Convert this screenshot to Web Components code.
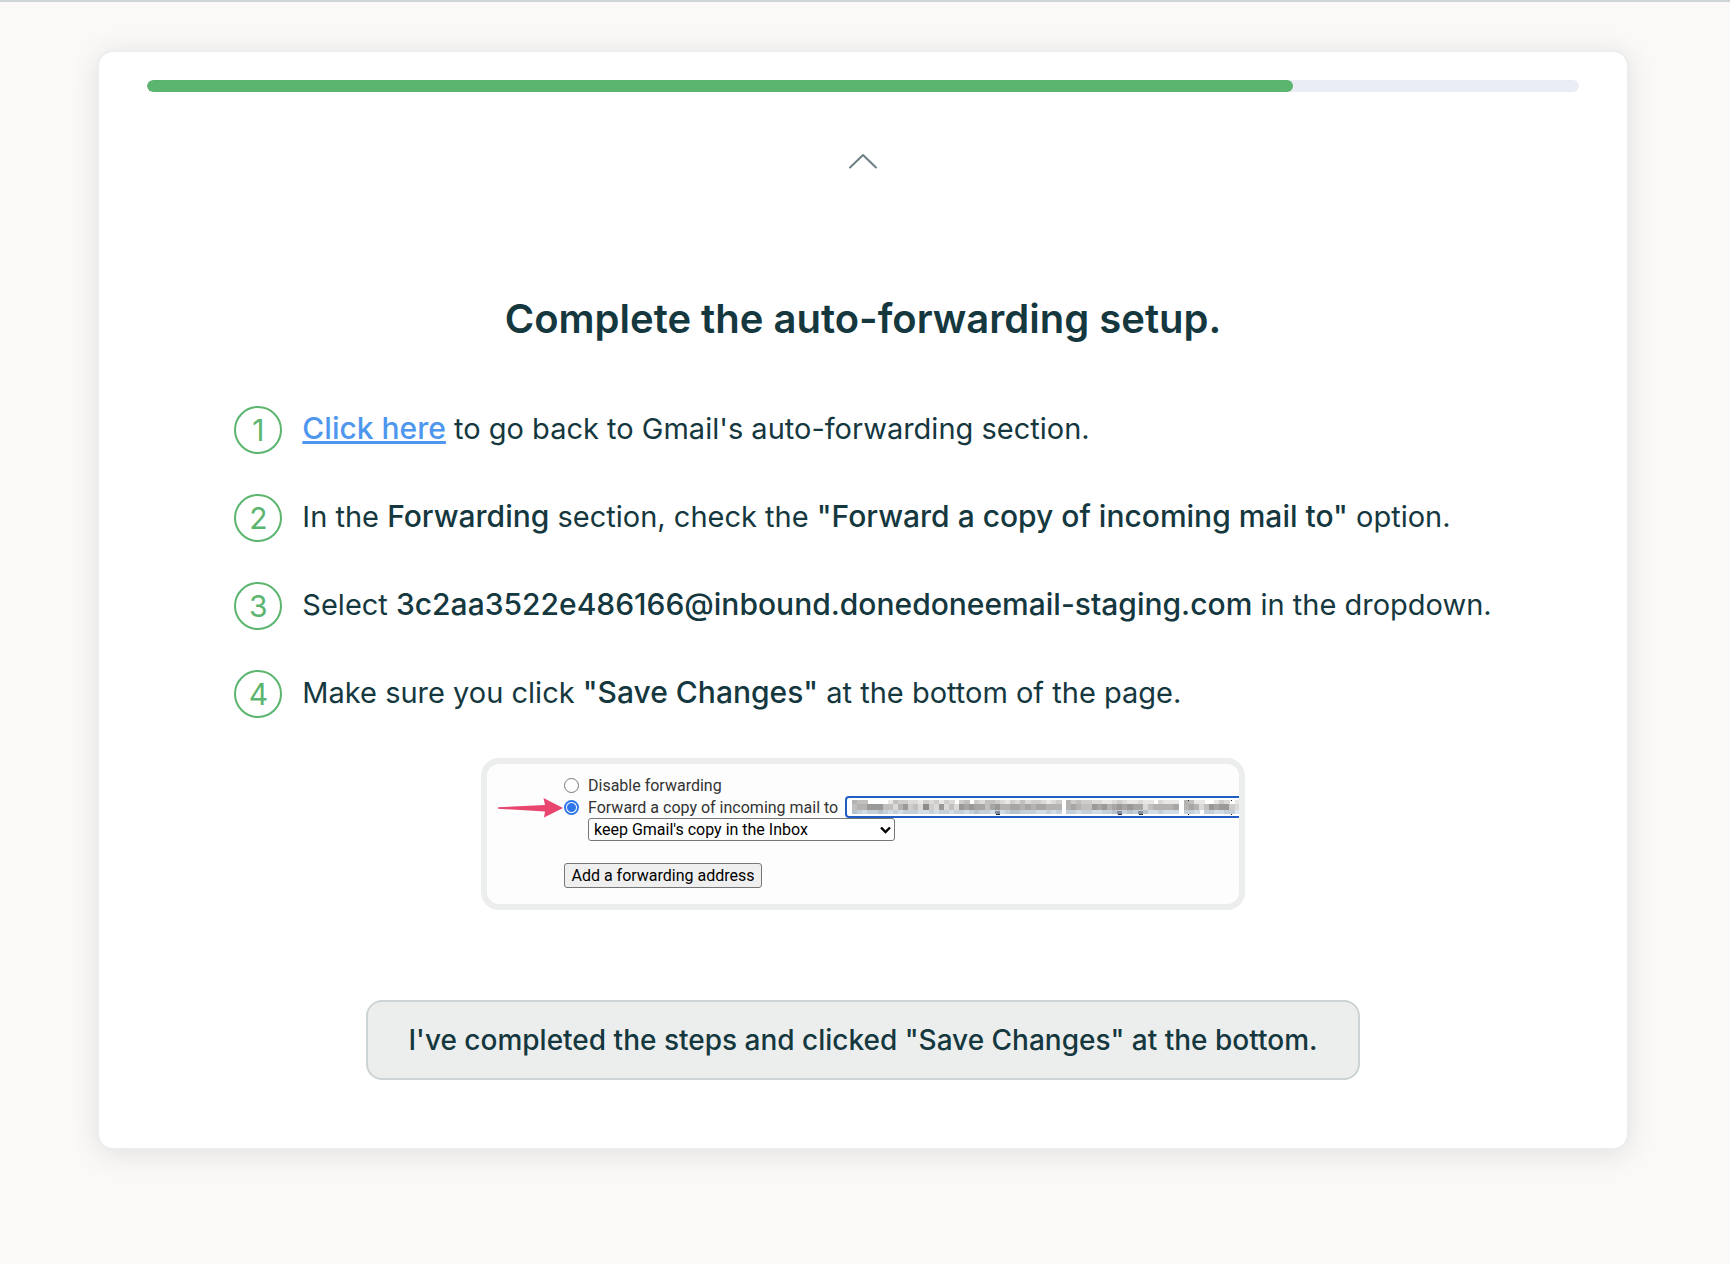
<!DOCTYPE html>
<html lang="en">
<head>
<meta charset="utf-8">
<title>Auto-forwarding setup</title>
<style>
  :root {
    --ink: #15383f;
    --green: #5bb56e;
    --mist: #eceeed;
    --line: #cdd4d6;
    --link: #4f97ee;
  }
  * { box-sizing: border-box; }
  body {
    margin: 0;
    min-height: 100vh;
    border-top: 2px solid var(--line);
    background: #faf9f7;
    color: var(--ink);
    font-family: Inter, "Noto Sans", sans-serif;
    padding: 48px 101px 48px 97px;
  }
  a { color: var(--link); font-size: 30px; font-weight: 500; text-decoration: underline; text-decoration-thickness: 3px; text-underline-offset: 2px; text-decoration-skip-ink: none; }
  strong { font-size: 30px; font-weight: 500; }
</style>
</head>
<body>
<setup-card>
  <setup-progress slot="progress" value="80"></setup-progress>
  <span slot="title">Complete the auto-forwarding setup.</span>
  <setup-step number="1"><a href="#forwarding">Click here</a> to go back to Gmail's auto-forwarding section.</setup-step>
  <setup-step number="2">In the <strong>Forwarding</strong> section, check the <strong>"Forward a copy of incoming mail to"</strong> option.</setup-step>
  <setup-step number="3">Select <strong>3c2aa3522e486166@inbound.donedoneemail-staging.com</strong> in the dropdown.</setup-step>
  <setup-step number="4">Make sure you click <strong>"Save Changes"</strong> at the bottom of the page.</setup-step>
  <gmail-preview slot="preview"></gmail-preview>
  <confirm-button slot="action">I've completed the steps and clicked "Save Changes" at the bottom.</confirm-button>
</setup-card>

<script>
function define(name, html, setup) {
  const template = document.createElement('template');
  template.innerHTML = '<style>*{box-sizing:border-box}</style>' + html;
  customElements.define(name, class extends HTMLElement {
    connectedCallback() {
      if (this.shadowRoot) return;
      const root = this.attachShadow({ mode: 'open' });
      root.append(template.content.cloneNode(true));
      if (setup) setup(this, root);
    }
  });
}

define('setup-card', `
  <style>
    :host { display: flex; flex-direction: column; align-items: center; background: #fff; background-clip: padding-box;
      border: 2px solid var(--mist); border-radius: 16px; padding: 28px 48px 68px; box-shadow: 0 4px 28px rgba(0,0,0,.1); }
    slot[name=progress] { display: block; width: 100%; }
    .back { appearance: none; border: 0; background: none; padding: 0; margin-top: 61px; display: block; }
    .back svg { display: block; }
    h1 { margin: 126px 0 63px; font-size: 40px; line-height: 48px; font-weight: 600; text-align: center; }
    .steps { display: flex; flex-direction: column; gap: 40px; margin-bottom: 40px; }
    slot[name=preview] { display: flex; justify-content: center; width: 100%; margin-bottom: 90px; }
  </style>
  <slot name="progress"></slot>
  <button class="back" type="button" aria-label="Previous step">
    <svg width="30" height="16" viewBox="0 0 30 16" fill="none" stroke="#6c8085" stroke-width="2" stroke-linecap="round" stroke-linejoin="round"><path d="M2 14.500L15 2L28 14.500"/></svg>
  </button>
  <h1><slot name="title"></slot></h1>
  <div class="steps" role="list"><slot></slot></div>
  <slot name="preview"></slot>
  <slot name="action"></slot>`);

define('setup-progress', `
  <style>
    :host { display: block; height: 12px; border-radius: 6px; background: #eaedf6; overflow: hidden; }
    .bar { height: 100%; border-radius: 6px; background: var(--green); }
  </style>
  <div class="bar" role="progressbar" aria-label="Setup progress"></div>`,
  (el, root) => { root.querySelector('.bar').style.width = el.getAttribute('value') + '%'; });

define('setup-step', `
  <style>
    :host { display: flex; gap: 20px; align-items: flex-start; }
    .num { flex: none; width: 48px; height: 48px; border: 2px solid var(--green); border-radius: 50%; color: var(--green);
      font-size: 30px; line-height: 44px; text-align: center; }
    .text { font-size: 29px; line-height: 44px; }
  </style>
  <div class="num"></div>
  <div class="text"><slot></slot></div>`,
  (el, root) => { el.setAttribute('role', 'listitem'); root.querySelector('.num').textContent = el.getAttribute('number'); });

define('confirm-button', `
  <style>
    :host { display: block; }
    button { appearance: none; display: block; border: 2px solid var(--line); border-radius: 16px; background: var(--mist);
      color: var(--ink); font: 500 28px/40px Inter, "Noto Sans", sans-serif; padding: 18px 40px; }
  </style>
  <button type="button"><slot></slot></button>`);

define('pixel-mask', `
  <style>:host { display: block; } svg { display: block; }</style>
  <svg width="388" height="15" viewBox="0 0 388 15" shape-rendering="crispEdges" aria-hidden="true"></svg>`,
  (el, root) => {
    const rows = [
      [0, 4, '54400001433221323132034032443213242332123' + '0' + '5343322112321121102111' + '0' + '54110013201'],
      [4, 6, '45577744257342832724276766467556656566555' + '0' + '5654476756767662455556' + '0' + '56524767732'],
      [10, 4, '43233432323332232332332343323234433322323' + '0' + '3323322334334334223222' + '0' + '33203322331']
    ];
    let out = '';
    rows.forEach(([y, h, data], r) => [...data].forEach((d, i) => {
      if (d === '0') return;
      const v = 246 - d * 13;
      const fill = r === 2 ? `rgb(${v - 10},${v},${v + 9})` : `rgb(${v},${v - 2},${v - 4})`;
      out += `<rect x="${Math.round(i * 5.1)}" y="${y}" width="6" height="${h}" fill="${fill}"/>`;
    }));
    for (const x of [143, 265, 286]) out += `<rect x="${x}" y="11" width="5" height="3" fill="#858d98"/><rect x="${x + 1}" y="14" width="4" height="1" fill="#20344e"/>`;
    for (const x of [336, 379]) out += `<rect x="${x}" y="0" width="1" height="1" fill="#222"/><rect x="${x}" y="14" width="1" height="1" fill="#222"/>`;
    root.querySelector('svg').innerHTML = out;
  });

define('gmail-preview', `
  <style>
    :host { display: block; width: 764px; max-width: 100%; border: 6px solid var(--mist); border-radius: 18px; background: #fdfdfd;
      overflow: hidden; color: #333; font: 16px/22px Roboto, "Noto Sans", sans-serif; padding: 10px 0 16px 11px; }
    .row { display: flex; align-items: center; height: 22px; white-space: nowrap; }
    .pointer { flex: none; width: 66px; height: 22px; }
    .pointer svg { display: block; }
    .row label { padding: 1px 7px 0 9px; }
    input[type=radio] { appearance: none; flex: none; width: 15px; height: 15px; margin: 1px 0 0; border: 1px solid #777; border-radius: 50%; background: #fff; }
    input[type=radio]:checked { border: 2px solid #2f76ea; background: radial-gradient(circle, #2f76ea 4px, #fff 5px); }
    .field { flex: none; display: grid; width: 420px; height: 22px; border: 2px solid #1f5fc4; border-radius: 4px; background: #fff; align-items: center; }
    .field > * { grid-area: 1 / 1; }
    .field input { appearance: none; width: 100%; height: 18px; border: 0; padding: 0; background: none; outline: 0; }
    pixel-mask { padding: 1px 0 0 5px; }
    .pick { display: grid; width: 307px; margin-left: 90px; align-items: center; }
    .pick > * { grid-area: 1 / 1; }
    .pick svg { justify-self: end; margin-right: 4px; pointer-events: none; }
    select { appearance: none; width: 100%; height: 23px; border: 1px solid #777; border-radius: 3px; background: #fff; color: #000; font: inherit; line-height: 20px; padding: 1px 5px 0; }
    button { appearance: none; display: block; width: 198px; height: 25px; margin: 22px 0 0 66px; border: 1px solid #777; border-radius: 3px; background: #efefef; color: #000; font: inherit; padding: 1px 0 0; }
  </style>
  <div class="row">
    <span class="pointer"></span>
    <input type="radio" name="forward" id="off"><label for="off">Disable forwarding</label>
  </div>
  <div class="row">
    <span class="pointer"><svg width="66" height="22" viewBox="0 0 66 22"><path d="M0 11.200L47 9L45.500 2L65 12L46 21.500L47 15.500L0 12.800Z" fill="#e8456f"/></svg></span>
    <input type="radio" name="forward" id="on" checked><label for="on">Forward a copy of incoming mail to</label>
    <span class="field"><input type="text" aria-label="Forwarding address" readonly><pixel-mask></pixel-mask></span>
  </div>
  <div class="pick">
    <select aria-label="Original message"><option>keep Gmail's copy in the Inbox</option></select>
    <svg width="11" height="8" viewBox="0 0 11 8" fill="none" stroke="#000" stroke-width="2.400"><path d="M1 1.500L5.500 6L10 1.500"/></svg>
  </div>
  <button type="button">Add a forwarding address</button>`);
</script>
</body>
</html>
